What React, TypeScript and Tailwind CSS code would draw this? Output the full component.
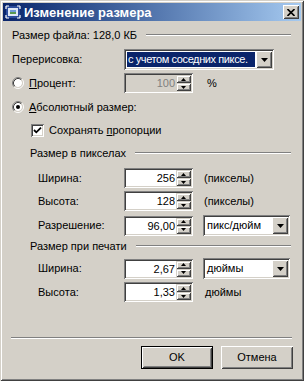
import React from 'react';

const raised =
  'shadow-[inset_1px_1px_#ffffff,inset_-1px_-1px_#404040,inset_2px_2px_#d4d0c8,inset_-2px_-2px_#808080]';
const sunken =
  'shadow-[inset_1px_1px_#808080,inset_-1px_-1px_#ffffff,inset_2px_2px_#404040,inset_-2px_-2px_#d4d0c8]';
const smallRaised =
  'shadow-[inset_1px_1px_#d4d0c8,inset_-1px_-1px_#404040,inset_2px_2px_#ffffff,inset_-2px_-2px_#808080]';

function Etched({ className = '' }: { className?: string }) {
  return <div className={`h-[2px] border-t border-t-[#808080] border-b border-b-white ${className}`} />;
}

function Radio({ checked }: { checked?: boolean }) {
  return (
    <svg width="12" height="12" viewBox="0 0 12 12" className="shrink-0">
      <circle cx="6" cy="6" r="4" fill="#ffffff" />
      <path d="M2.11 9.89 A5.5 5.5 0 0 1 9.89 2.11" stroke="#808080" fill="none" />
      <path d="M9.89 2.11 A5.5 5.5 0 0 1 2.11 9.89" stroke="#ffffff" fill="none" />
      <path d="M2.82 9.18 A4.5 4.5 0 0 1 9.18 2.82" stroke="#404040" fill="none" />
      <path d="M9.18 2.82 A4.5 4.5 0 0 1 2.82 9.18" stroke="#d4d0c8" fill="none" />
      {checked && <circle cx="6" cy="6" r="2" fill="#000000" />}
    </svg>
  );
}

function Checkbox() {
  return (
    <div className={`w-[13px] h-[13px] bg-white shrink-0 flex items-center justify-center ${sunken}`}>
      <svg width="9" height="9" viewBox="0 0 9 9">
        <path d="M1 4 L3.3 6.3 L8 1.6" stroke="#000000" strokeWidth="1.8" fill="none" />
      </svg>
    </div>
  );
}

function Arrow({ up, size = 'sm' }: { up?: boolean; size?: 'sm' | 'lg' }) {
  if (size === 'lg') {
    return (
      <svg width="7" height="4" viewBox="0 0 7 4">
        <path d="M0 0 H7 L3.5 4 Z" fill="#000000" />
      </svg>
    );
  }
  return (
    <svg width="5" height="3" viewBox="0 0 5 3">
      <path d={up ? 'M2.5 0 L5 3 H0 Z' : 'M0 0 H5 L2.5 3 Z'} fill="#000000" />
    </svg>
  );
}

function Spin({ value, disabled }: { value: string; disabled?: boolean }) {
  return (
    <div
      className={`flex w-[69px] h-[20px] p-[2px] shrink-0 ${sunken} ${disabled ? 'bg-[#d4d0c8]' : 'bg-white'}`}
    >
      <div
        className={`flex-1 text-right pr-[1px] leading-[16px] ${
          disabled ? 'text-[#808080]' : 'text-black'
        }`}
      >
        {value}
      </div>
      <div className="flex flex-col w-[15px]">
        <div className={`h-[8px] bg-[#d4d0c8] flex items-center justify-center ${smallRaised}`}>
          <Arrow up />
        </div>
        <div className={`h-[8px] bg-[#d4d0c8] flex items-center justify-center ${smallRaised}`}>
          <Arrow />
        </div>
      </div>
    </div>
  );
}

function Combo({
  value,
  width,
  selected,
}: {
  value: string;
  width: string;
  selected?: boolean;
}) {
  return (
    <div className={`flex h-[21px] p-[2px] bg-white shrink-0 ${sunken} ${width}`}>
      <div className="flex-1 min-w-0 p-[1px] overflow-hidden">
        <div
          className={`h-full leading-[15px] pl-[1px] whitespace-nowrap overflow-hidden ${
            selected ? 'bg-[#0a246a] text-white tracking-[-0.4px]' : 'text-black'
          }`}
        >
          {value}
        </div>
      </div>
      <div className={`w-[16px] h-[17px] bg-[#d4d0c8] flex items-center justify-center ${raised}`}>
        <Arrow size="lg" />
      </div>
    </div>
  );
}

function Button({ label, isDefault }: { label: string; isDefault?: boolean }) {
  if (isDefault) {
    return (
      <div className="w-[72px] h-[23px] border border-black">
        <div className={`w-full h-full bg-[#d4d0c8] flex items-center justify-center ${raised}`}>
          {label}
        </div>
      </div>
    );
  }
  return (
    <div className={`w-[72px] h-[23px] bg-[#d4d0c8] flex items-center justify-center ${raised}`}>
      {label}
    </div>
  );
}

export default function App() {
  return (
    <div
      className={`w-[304px] h-[381px] bg-[#d4d0c8] p-[3px] flex flex-col font-['Liberation_Sans',Arial,sans-serif] text-[11px] text-black shadow-[inset_1px_1px_#d4d0c8,inset_-1px_-1px_#404040,inset_2px_2px_#ffffff,inset_-2px_-2px_#808080]`}
    >
      {/* Title bar */}
      <div className="h-[18px] flex items-center pl-[2px] pr-[2px] bg-gradient-to-r from-[#0a246a] to-[#a6caf0]">
        <svg width="16" height="16" viewBox="0 0 16 16" className="shrink-0">
          <rect x="1" y="2" width="14" height="12" fill="#2c4c9c" />
          <rect x="3" y="4" width="10" height="8" fill="#dfe8f6" />
          <rect x="5" y="6" width="6" height="4" fill="#6f9bd8" />
          <rect x="5" y="8" width="6" height="2" fill="#5a9a52" />
          <path d="M1 2 h3 M1 2 v3 M15 2 h-3 M15 2 v3 M1 14 h3 M1 14 v-3 M15 14 h-3 M15 14 v-3" stroke="#ffffff" strokeWidth="1.2" />
        </svg>
        <span className="ml-[3px] text-white font-bold text-[13px] leading-none">Изменение размера</span>
        <div className={`ml-auto w-[16px] h-[14px] bg-[#d4d0c8] flex items-center justify-center ${raised}`}>
          <svg width="8" height="7" viewBox="0 0 8 7">
            <path d="M0.5 0 L7.5 7 M7.5 0 L0.5 7" stroke="#000000" strokeWidth="1.6" />
          </svg>
        </div>
      </div>

      {/* Client */}
      <div className="flex-1 flex flex-col pl-[9px] pr-[7px]">
        <div className="mt-[6px] h-[16px] flex items-center pr-[3px]">
          <span>Размер файла: 128,0 КБ</span>
          <Etched className="flex-1 ml-[9px]" />
        </div>

        <div className="mt-[6px] h-[21px] flex items-center">
          <span className="w-[112px]">Перерисовка:</span>
          <Combo value="с учетом соседних пиксе." width="w-[150px]" selected />
        </div>

        <div className="mt-[3px] h-[20px] flex items-center">
          <div className="w-[112px] flex items-center">
            <Radio />
            <span className="ml-[5px]">
              <span className="underline underline-offset-1">П</span>роцент:
            </span>
          </div>
          <Spin value="100" disabled />
          <span className="ml-[14px]">%</span>
        </div>

        <div className="mt-[6px] h-[16px] flex items-center">
          <Radio checked />
          <span className="ml-[5px]">
            <span className="underline underline-offset-1">А</span>бсолютный размер:
          </span>
        </div>

        <div className="mt-[7px] h-[16px] flex items-center pl-[19px]">
          <Checkbox />
          <span className="ml-[5px]">
            Сохранять <span className="underline underline-offset-1">п</span>ропорции
          </span>
        </div>

        <div className="mt-[7px] h-[16px] flex items-center pl-[18px] pr-[3px]">
          <span>Размер в пикселах</span>
          <Etched className="flex-1 ml-[9px]" />
        </div>

        <div className="mt-[7px] h-[20px] flex items-center pl-[26px]">
          <span className="w-[86px]">Ширина:</span>
          <Spin value="256" />
          <span className="ml-[11px]">(пикселы)</span>
        </div>

        <div className="mt-[3px] h-[20px] flex items-center pl-[26px]">
          <span className="w-[86px]">Высота:</span>
          <Spin value="128" />
          <span className="ml-[11px]">(пикселы)</span>
        </div>

        <div className="mt-[4px] h-[21px] flex items-center pl-[26px]">
          <span className="w-[86px]">Разрешение:</span>
          <Spin value="96,00" />
          <div className="ml-[10px]">
            <Combo value="пикс/дюйм" width="w-[87px]" />
          </div>
        </div>

        <div className="mt-[2px] h-[16px] flex items-center pl-[18px] pr-[3px]">
          <span>Размер при печати</span>
          <Etched className="flex-1 ml-[9px]" />
        </div>

        <div className="mt-[4px] h-[21px] flex items-center pl-[26px]">
          <span className="w-[86px]">Ширина:</span>
          <Spin value="2,67" />
          <div className="ml-[10px]">
            <Combo value="дюймы" width="w-[87px]" />
          </div>
        </div>

        <div className="mt-[3px] h-[20px] flex items-center pl-[26px]">
          <span className="w-[86px]">Высота:</span>
          <Spin value="1,33" />
          <span className="ml-[12px]">дюймы</span>
        </div>

        <Etched className="mt-[35px] mr-[2px] -ml-[1px]" />

        <div className="mt-[7px] flex justify-end gap-[8px] pr-[1px]">
          <Button label="OK" isDefault />
          <Button label="Отмена" />
        </div>
      </div>
    </div>
  );
}
